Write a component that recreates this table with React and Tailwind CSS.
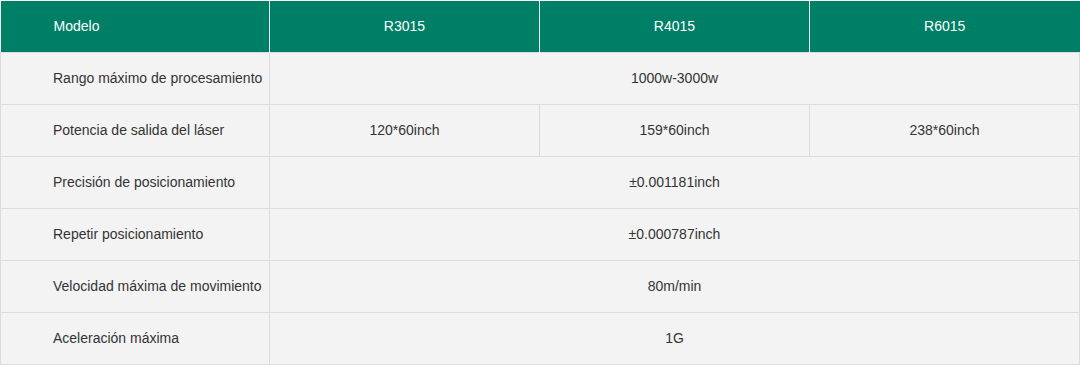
import React from 'react';

const rows = [
  { label: 'Rango máximo de procesamiento', values: ['1000w-3000w'] },
  { label: 'Potencia de salida del láser', values: ['120*60inch', '159*60inch', '238*60inch'] },
  { label: 'Precisión de posicionamiento', values: ['±0.001181inch'] },
  { label: 'Repetir posicionamiento', values: ['±0.000787inch'] },
  { label: 'Velocidad máxima de movimiento', values: ['80m/min'] },
  { label: 'Aceleración máxima', values: ['1G'] },
];

const App = () => {
  return (
    <div className="w-[1080px] h-[366px] bg-white pt-px font-['Liberation_Sans',Arial,sans-serif] text-[14px]">
      <table className="w-[1079px] table-fixed border-collapse">
        <colgroup>
          <col className="w-[269px]" />
          <col className="w-[270px]" />
          <col className="w-[270px]" />
          <col className="w-[270px]" />
        </colgroup>
        <thead>
          {/* Header */}
          <tr className="h-[51px] bg-[#007f67] text-white">
            <th className="border-r border-white text-left font-normal pl-[53px]">Modelo</th>
            <th className="border-r border-white font-normal">R3015</th>
            <th className="border-r border-white font-normal">R4015</th>
            <th className="font-normal">R6015</th>
          </tr>
        </thead>
        <tbody className="bg-[#f3f3f3] text-[#333]">
          {rows.map((row) => (
            <tr key={row.label} className="h-[52px]">
              <td className="border border-[#dcdcdc] pl-[52px]">{row.label}</td>
              {row.values.length === 1 ? (
                <td colSpan={3} className="border border-[#dcdcdc] text-center">{row.values[0]}</td>
              ) : (
                row.values.map((v) => (
                  <td key={v} className="border border-[#dcdcdc] text-center">{v}</td>
                ))
              )}
            </tr>
          ))}
        </tbody>
      </table>
    </div>
  );
};

export default App;
